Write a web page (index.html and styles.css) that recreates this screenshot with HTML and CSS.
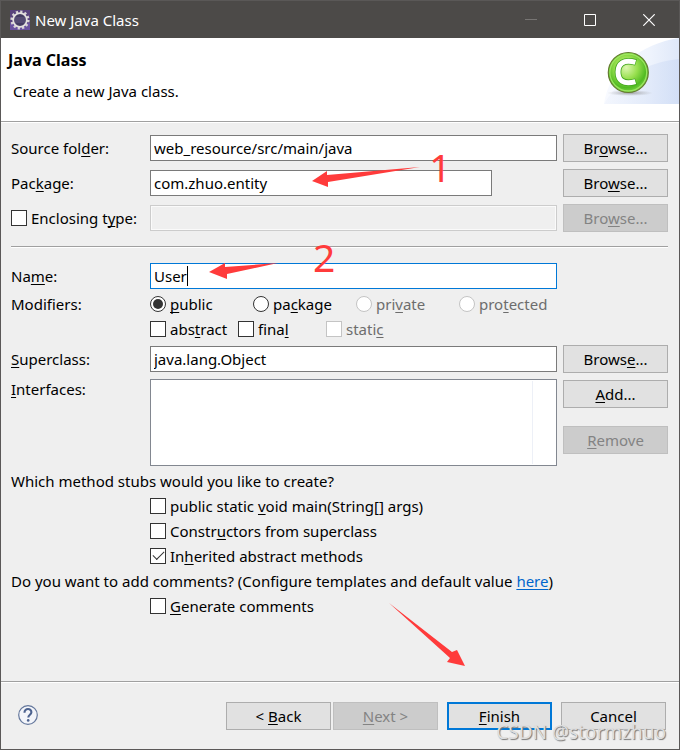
FILE: index.html
```html
<!DOCTYPE html>
<html lang="en">
<head>
<meta charset="utf-8">
<meta name="viewport" content="width=device-width, initial-scale=1">
<title>New Java Class</title>
<link rel="stylesheet" href="styles.css">
</head>
<body>
<main class="window">
  <header class="titlebar">
    <svg class="app-icon" viewBox="0 0 20 20" aria-hidden="true">
      <rect width="20" height="20" fill="#58427c"/>
      <path d="M0 13h20v7H0z" fill="#6b52a0"/>
      <circle cx="10" cy="10" r="8.3" fill="none" stroke="#d8d4d6" stroke-width="2.6" stroke-dasharray="2.2 2.14"/>
      <circle cx="10" cy="10" r="6.8" fill="#443b62" stroke="#e4e0df" stroke-width="1.8"/>
      <path d="M4.600 8h10.800M4.300 10h11.400M4.600 12h10.800" stroke="#70658d" stroke-width=".8"/>
    </svg>
    <span class="titlebar-text">New Java Class</span>
    <div class="controls">
      <button class="control" type="button" aria-label="Minimize" disabled><svg viewBox="0 0 12 12"><path d="M0 5.500h12" stroke="#777573"/></svg></button>
      <button class="control" type="button" aria-label="Maximize"><svg viewBox="0 0 12 12"><path d="M.5.500h11v11H.5z" stroke="#fff"/></svg></button>
      <button class="control" type="button" aria-label="Close"><svg viewBox="0 0 12 12"><path d="M.3.300l11.400 11.400M11.700.300L.3 11.700" stroke="#fff" stroke-width="1.200"/></svg></button>
    </div>
  </header>

  <section class="banner">
    <div class="banner-text">
      <h1>Java Class</h1>
      <p>Create a new Java class.</p>
    </div>
    <svg class="banner-art" viewBox="0 0 75 66" aria-hidden="true">
      <defs>
        <linearGradient id="wave" x1="0" x2="1"><stop offset="0" stop-color="#f8faff"/><stop offset=".6" stop-color="#eff4fd"/><stop offset="1" stop-color="#dfe8f9"/></linearGradient>
        <linearGradient id="wave2" x1="0" x2="1"><stop offset="0" stop-color="#f1f5fd"/><stop offset="1" stop-color="#ccdaf5"/></linearGradient>
        <radialGradient id="ball" cx=".45" cy=".38" r=".62"><stop offset="0" stop-color="#dcf7b0"/><stop offset=".45" stop-color="#97df4e"/><stop offset=".8" stop-color="#51bb22"/><stop offset="1" stop-color="#79d343"/></radialGradient>
        <radialGradient id="shade"><stop offset="0" stop-color="#777" stop-opacity=".65"/><stop offset="1" stop-color="#999" stop-opacity="0"/></radialGradient>
      </defs>
      <path d="M0 66C5 30 37 6 75 0v66z" fill="url(#wave)"/>
      <path d="M0 66C15 40 43 24 75 21v45z" fill="url(#wave2)" opacity=".65"/>
      <ellipse cx="26" cy="55" rx="23" ry="3" fill="url(#shade)"/>
      <circle cx="24.300" cy="34.500" r="20" fill="url(#ball)" stroke="#657b32" stroke-width="1.200"/>
      <circle cx="24.300" cy="34.500" r="18.400" fill="none" stroke="#a7ec6c" stroke-width="1.200" opacity=".8"/>
      <path d="M32 24.400C19.500 20.800 14 26 14 34s5 13.200 18 9.600" fill="none" stroke="#40a51c" stroke-width="6.600"/>
      <path d="M31.400 24.400C19.500 20.800 14 26 14 34s5 13.200 17.400 9.600" fill="none" stroke="#fff" stroke-width="5"/>
    </svg>
  </section>

  <form class="form" id="class-form">
    <div class="grid">
      <label for="source">Source fol<u>d</u>er:</label>
      <input class="field" id="source" type="text" value="web_resource/src/main/java">
      <button class="btn" type="button">Br<u>o</u>wse...</button>

      <label for="package">Pac<u>k</u>age:</label>
      <input class="field field-package" id="package" type="text" value="com.zhuo.entity">
      <button class="btn" type="button">Bro<u>w</u>se...</button>

      <label class="option"><input type="checkbox"><span>Enclosing t<u>y</u>pe:</span></label>
      <input class="field" type="text" aria-label="Enclosing type" disabled>
      <button class="btn" type="button" disabled>Bro<u>w</u>se...</button>
    </div>

    <hr class="rule">

    <div class="grid">
      <label for="name">Na<u>m</u>e:</label>
      <div class="name-field">
        <input class="field field-active" id="name" type="text" value="User">
        <span class="caret"></span>
      </div>
    </div>

    <div class="line">
      <span id="modifiers">Modifiers:</span>
      <div class="access" role="radiogroup" aria-labelledby="modifiers">
        <label class="option"><input type="radio" name="access" checked><span><u>p</u>ublic</span></label>
        <label class="option"><input type="radio" name="access"><span>pa<u>c</u>kage</span></label>
        <label class="option option-off"><input type="radio" name="access" disabled><span>pri<u>v</u>ate</span></label>
        <label class="option option-off"><input type="radio" name="access" disabled><span>pro<u>t</u>ected</span></label>
      </div>
    </div>
    <div class="line line-indent">
      <div class="flags">
        <label class="option"><input type="checkbox"><span>abs<u>t</u>ract</span></label>
        <label class="option"><input type="checkbox"><span>fina<u>l</u></span></label>
        <label class="option option-off"><input type="checkbox" disabled><span>stati<u>c</u></span></label>
      </div>
    </div>

    <div class="grid grid-super">
      <label for="super"><u>S</u>uperclass:</label>
      <input class="field" id="super" type="text" value="java.lang.Object">
      <button class="btn" type="button">Brows<u>e</u>...</button>
    </div>

    <div class="grid grid-interfaces">
      <span id="interfaces"><u>I</u>nterfaces:</span>
      <div class="list" role="listbox" tabindex="0" aria-labelledby="interfaces"></div>
      <div class="list-buttons">
        <button class="btn" type="button"><u>A</u>dd...</button>
        <button class="btn" type="button" disabled><u>R</u>emove</button>
      </div>
    </div>

    <div class="line">Which method stubs would you like to create?</div>
    <div class="line line-indent"><label class="option"><input type="checkbox"><span>public static <u>v</u>oid main(String[] args)</span></label></div>
    <div class="line line-indent"><label class="option"><input type="checkbox"><span>Constr<u>u</u>ctors from superclass</span></label></div>
    <div class="line line-indent"><label class="option"><input type="checkbox" checked><span>In<u>h</u>erited abstract methods</span></label></div>
    <div class="line"><p>Do you want to add comments? (Configure templates and default value <a href="#">here</a>)</p></div>
    <div class="line line-indent"><label class="option"><input type="checkbox"><span><u>G</u>enerate comments</span></label></div>
  </form>

  <footer class="footer">
    <button class="help" type="button" aria-label="Help">
      <svg viewBox="0 0 20 20"><circle cx="10" cy="10" r="9.300" fill="#f3f5fa" stroke="#64779c" stroke-width="1.200"/><path d="M6.500 7.800C6.300 2.800 13.600 3 13.400 7.200c-.1 2.500-3.100 2.600-3.100 5.300" fill="none" stroke="#4d6390" stroke-width="2.100"/><circle cx="10.200" cy="15.400" r="1.300" fill="#4d6390"/></svg>
    </button>
    <div class="nav">
      <button class="btn" type="button">&lt; <u>B</u>ack</button>
      <button class="btn" type="button" disabled><u>N</u>ext &gt;</button>
    </div>
    <button class="btn btn-default" type="submit" form="class-form"><u>F</u>inish</button>
    <button class="btn" type="button">Cancel</button>
  </footer>

  <svg class="arrows" viewBox="0 0 680 750" aria-hidden="true">
    <path d="M312 181l15-10v4l93-8-92 15v5z"/>
    <path d="M209 272l16-9v4l53-4-51 11v5z"/>
    <path d="M389 603l63 49 5-2 8 16-18-4 3-4z"/>
  </svg>
  <span class="note note-one">1</span>
  <span class="note note-two">2</span>
  <span class="watermark">CSDN @stormzhuo</span>
</main>
</body>
</html>
```
FILE: styles.css
```css
* {
  box-sizing: border-box;
}

body {
  margin: 0;
  font: 15px/20px "Noto Sans", "Open Sans", sans-serif;
  color: #000;
}

button,
input {
  font: inherit;
  color: inherit;
  margin: 0;
}

u {
  text-underline-offset: 2px;
  text-decoration-thickness: 1px;
  text-decoration-skip-ink: none;
}

h1,
p {
  margin: 0;
}

.window {
  position: relative;
  display: flex;
  flex-direction: column;
  min-height: 100vh;
  background: #efefef;
  border: 1px solid #5a5857;
}

.titlebar {
  display: flex;
  align-items: center;
  height: 37px;
  padding: 0 1px 0 9px;
  background: #4c4a48;
  color: #fff;
}

.app-icon {
  width: 20px;
  height: 20px;
  margin-right: 5px;
}

.controls {
  display: flex;
  margin-left: auto;
}

.control {
  display: flex;
  align-items: center;
  justify-content: center;
  width: 59px;
  height: 36px;
  padding: 0;
  background: none;
  border: 0;
}

.control svg {
  width: 12px;
  height: 12px;
  fill: none;
}

.banner {
  display: flex;
  justify-content: space-between;
  height: 85px;
  background: #fff;
  border-bottom: 1px solid #fff;
  box-shadow: inset 0 -1px #a0a0a0;
}

.banner-text {
  padding: 12px 0 0 7px;
}

.banner-text h1 {
  font-size: 16px;
  line-height: 20px;
}

.banner-text p {
  margin: 11px 0 0 5px;
}

.banner-art {
  width: 75px;
  height: 66px;
}

.form {
  flex: 1;
  padding: 11px 11px 0 10px;
}

.grid {
  display: grid;
  grid-template-columns: 133px 1fr 105px;
  gap: 7px 6px;
  align-items: center;
  grid-auto-rows: minmax(28px, auto);
}

.grid-super {
  margin-top: 4px;
}

.grid-interfaces {
  margin: 6px 0 2px;
  align-items: start;
}

.field {
  width: 100%;
  height: 26px;
  padding: 0 3px;
  background: #fff;
  border: 1px solid #7a7a7a;
  outline: 0;
}

.field:disabled {
  background: #efefef;
  border-color: #ccc;
  box-shadow: inset 0 0 0 1px #fafafa;
}

.field-package {
  width: 84%;
}

.field-active {
  border-color: #0078d7;
}

.name-field {
  position: relative;
  display: flex;
}

.caret {
  position: absolute;
  left: 37px;
  top: 3px;
  width: 1px;
  height: 20px;
  background: #000;
}

.btn {
  width: 105px;
  height: 28px;
  padding: 0;
  background: #e1e1e1;
  border: 1px solid #adadad;
}

.btn:disabled {
  background: #ccc;
  border-color: #bfbfbf;
  color: #838383;
}

.btn-default {
  border: 2px solid #0078d7;
}

.rule {
  height: 2px;
  margin: 14px 0;
  border: 0;
  border-top: 1px solid #a0a0a0;
  background: #fff;
}

.line {
  display: flex;
  align-items: center;
  min-height: 25px;
}

.grid + .line > span {
  width: 139px;
}

.grid + .line {
  margin-top: 1px;
}

.grid-interfaces + .line {
  margin-top: 0;
}

.line-indent {
  padding-left: 139px;
}

.access {
  display: grid;
  grid-template-columns: repeat(4, 103px);
}

.flags {
  display: grid;
  grid-template-columns: repeat(3, 88px);
}

.option {
  display: flex;
  align-items: center;
  gap: 4px;
  white-space: nowrap;
}

.option-off {
  color: #6d6d6d;
}

.option input {
  appearance: none;
  flex: none;
  display: grid;
  place-items: center;
  width: 16px;
  height: 16px;
  background: #fff;
  border: 1px solid #333;
}

.option input[type="radio"] {
  border-radius: 50%;
}

.option input:disabled {
  border-color: #c4c4c4;
}

.option input[type="radio"]:checked::before {
  content: "";
  width: 10px;
  height: 10px;
  border-radius: 50%;
  background: #333;
}

.option input[type="checkbox"]:checked::before {
  content: "";
  width: 10px;
  height: 5px;
  margin-bottom: 3px;
  border: solid #333;
  border-width: 0 0 1px 1px;
  transform: rotate(-45deg);
}

.list {
  display: flex;
  justify-content: flex-end;
  height: 87px;
  padding: 1px;
  background: #fff;
  border: 1px solid #828790;
}

.list::after {
  content: "";
  width: 22px;
  border-left: 1px solid #edf0f7;
}

.list-buttons {
  display: grid;
  gap: 18px;
  padding-top: 1px;
}

a {
  color: #0066cc;
  text-underline-offset: 2px;
}

.footer {
  display: flex;
  align-items: flex-start;
  gap: 9px;
  min-height: 68px;
  padding: 20px 13px 19px 17px;
  border-top: 1px solid #a0a0a0;
  box-shadow: inset 0 1px #fff;
}

.help {
  display: flex;
  margin: 3px auto 0 0;
  padding: 0;
  background: none;
  border: 0;
}

.help svg {
  width: 20px;
  height: 20px;
}

.nav {
  display: flex;
  gap: 2px;
}

.arrows {
  position: absolute;
  left: -1px;
  top: -1px;
  width: 680px;
  height: 750px;
  fill: #ff3b3b;
  pointer-events: none;
}

.note {
  position: absolute;
  font-size: 39px;
  line-height: 40px;
  color: #ff3b3b;
}

.note-one {
  left: 428px;
  top: 146px;
}

.note-two {
  left: 312px;
  top: 236px;
}

.watermark {
  position: absolute;
  right: 13px;
  bottom: 5px;
  font-size: 19px;
  line-height: 24px;
  color: #dedede;
  text-shadow: 1px 1px 1px #777;
  pointer-events: none;
}
```
